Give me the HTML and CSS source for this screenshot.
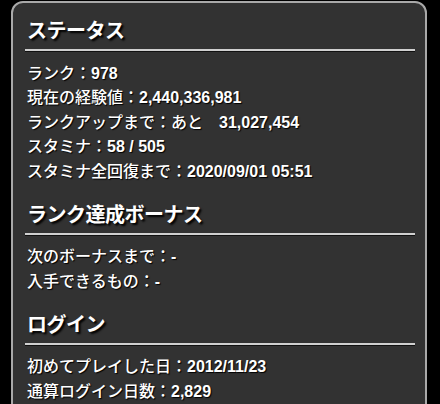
FILE: index.html
```html
<!DOCTYPE html>
<html lang="ja">
<head>
<meta charset="utf-8">
<link rel="stylesheet" href="styles.css">
</head>
<body>
<div class="panel">
  <section class="section">
    <h2 class="heading">ステータス</h2>
    <ul class="list">
      <li>ランク：<span class="num">978</span></li>
      <li>現在の経験値：<span class="num">2,440,336,981</span></li>
      <li>ランクアップまで：あと&ensp;&ensp;<span class="num">31,027,454</span></li>
      <li>スタミナ：<span class="num">58 / 505</span></li>
      <li>スタミナ全回復まで：<span class="num">2020/09/01 05:51</span></li>
    </ul>
  </section>
  <section class="section">
    <h2 class="heading">ランク達成ボーナス</h2>
    <ul class="list">
      <li>次のボーナスまで：<span class="num">-</span></li>
      <li>入手できるもの：<span class="num">-</span></li>
    </ul>
  </section>
  <section class="section">
    <h2 class="heading">ログイン</h2>
    <ul class="list">
      <li>初めてプレイした日：<span class="num">2012/11/23</span></li>
      <li>通算ログイン日数：<span class="num">2,829</span></li>
    </ul>
  </section>
</div>
</body>
</html>
```

FILE: styles.css
```css
html, body {
  margin: 0;
  padding: 0;
  background: #000;
  height: 100%;
  overflow: hidden;
}

body {
  font-family: "Liberation Sans", "Noto Sans CJK JP", sans-serif;
  color: #fff;
}

.panel {
  margin: 1px 0 0 11px;
  width: 416px;
  height: 600px;
  border: 2px solid #a9a9a9;
  border-radius: 12px;
  background: #323232;
  padding: 14px 10px 0 12px;
  box-sizing: border-box;
}

.section {
  margin-bottom: 16.5px;
}

.heading {
  margin: 0;
  font-size: 20px;
  font-weight: bold;
  line-height: 28px;
  padding: 0 0 4px 2px;
  border-bottom: 2px solid #d0d0d0;
  box-shadow: 0 1px 0 #111;
  text-shadow: 2px 2px 2px #000;
  letter-spacing: -0.5px;
}

.list {
  list-style: none;
  margin: 0;
  padding: 10.5px 0 0 2px;
  font-size: 16px;
  line-height: 24.5px;
  text-shadow: 1px 1px 1px #000;
  font-weight: 500;
}

.num {
  font-weight: bold;
}
```
